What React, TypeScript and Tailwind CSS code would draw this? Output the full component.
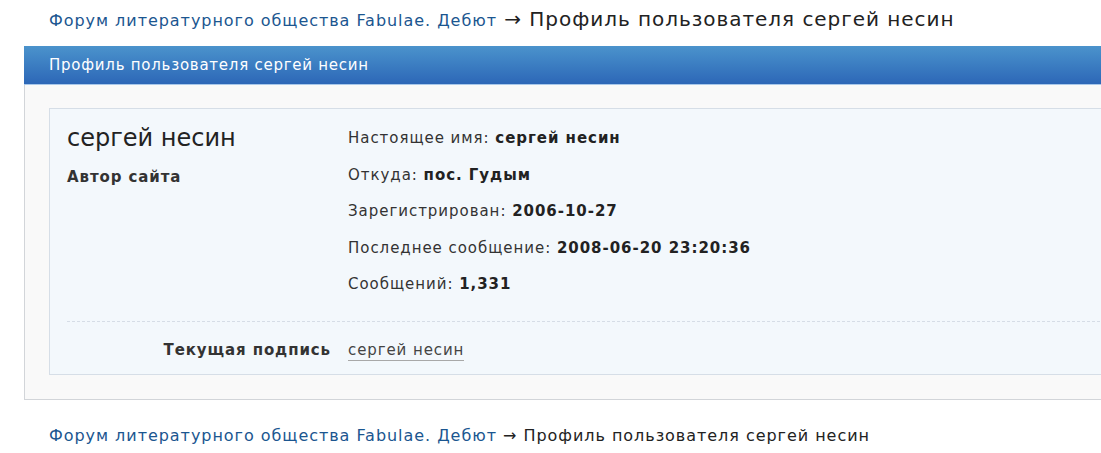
import React from 'react';

const rows: { label: string; value: string }[] = [
  { label: 'Настоящее имя:', value: 'сергей несин' },
  { label: 'Откуда:', value: 'пос. Гудым' },
  { label: 'Зарегистрирован:', value: '2006-10-27' },
  { label: 'Последнее сообщение:', value: '2008-06-20 23:20:36' },
  { label: 'Сообщений:', value: '1,331' },
];

const Crumbs: React.FC<{ big?: boolean }> = ({ big }) => (
  <div className="pl-[49px] flex items-baseline whitespace-nowrap tracking-[0.06em]">
    <a href="#" className="text-[16px] text-[#1b5690] no-underline">
      Форум литературного общества Fabulae. Дебют
    </a>
    <span className={`text-[#222] ${big ? 'text-[20px]' : 'text-[16px]'}`}>
      &nbsp;→ Профиль пользователя сергей несин
    </span>
  </div>
);

export default function App() {
  return (
    <div className="w-[1101px] h-[453px] overflow-hidden bg-white text-[#222] font-['DejaVu_Sans','Verdana',sans-serif]">
      {/* Breadcrumbs */}
      <div className="h-[46px] flex items-center pb-[8px]">
        <Crumbs big />
      </div>

      <div className="ml-[24px] w-[1110px]">
        {/* Title bar */}
        <div className="h-[39px] flex items-center pl-[25px] bg-gradient-to-b from-[#4b93cc] to-[#2d67b7] border-b border-[#a9c8ea] text-[15px] tracking-[0.05em] text-white">
          Профиль пользователя сергей несин
        </div>

        {/* Body */}
        <div className="bg-[#f9f9f9] border border-t-0 border-[#d2d5d9] pt-[23px] pb-[24px] pl-[24px]">
          <div className="bg-[#f3f8fc] border border-[#d6dee7] h-[267px] px-[17px] pt-[11px]">
            <div className="flex">
              <div className="w-[281px] shrink-0">
                <div className="h-[36px] flex items-center text-[24px] text-[#222]">сергей несин</div>
                <div className="h-[40px] pt-[3px] flex items-center font-bold text-[15px] tracking-[0.06em] text-[#333]">Автор сайта</div>
              </div>
              <div className="flex flex-col tracking-[0.06em]">
                {rows.map((r) => (
                  <div key={r.label} className="h-[36.5px] flex items-center text-[15px] text-[#333]">
                    {r.label}&nbsp;<b className="text-[#222]">{r.value}</b>
                  </div>
                ))}
              </div>
            </div>

            <div className="mt-[18px] border-t border-dashed border-[#d6dde6]" />

            <div className="flex h-[57px] items-center text-[15px] tracking-[0.06em]">
              <div className="w-[264px] shrink-0 text-right font-bold text-[#333]">Текущая подпись</div>
              <div className="pl-[17px]">
                <span className="text-[#444] border-b border-[#a8a8a8] leading-[20px] inline-block">сергей несин</span>
              </div>
            </div>
          </div>
        </div>
      </div>

      {/* Footer breadcrumbs */}
      <div className="h-[53px] flex items-center pt-[19px]">
        <Crumbs />
      </div>
    </div>
  );
}
